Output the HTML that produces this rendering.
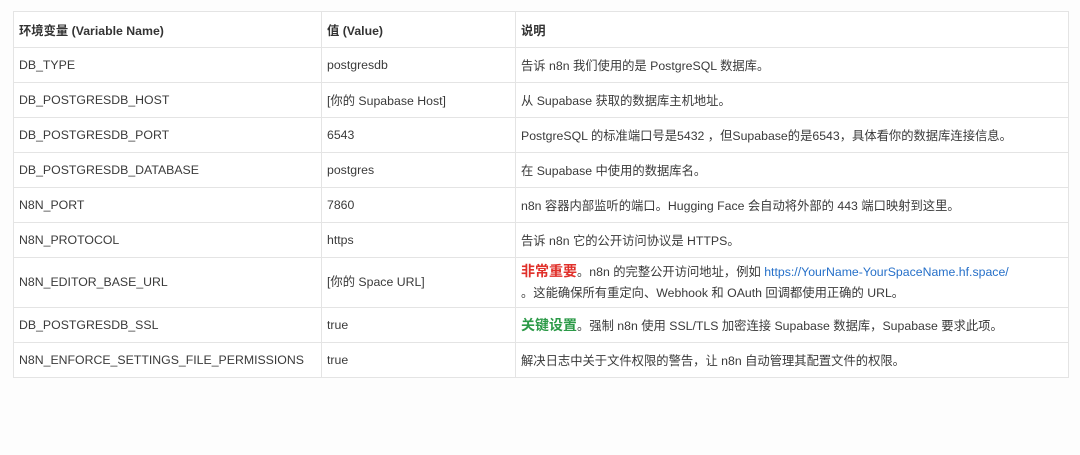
<!DOCTYPE html>
<html><head><meta charset="utf-8"><style>
body{margin:0;width:1080px;height:455px;background:#fdfdfd;font-family:"Liberation Sans","Noto Sans CJK SC",sans-serif;font-size:12.3px;color:#3a3a3a;overflow:hidden}
table{position:absolute;left:13px;top:11px;border-collapse:collapse;width:1056px;background:#fff}
td,th{border:1px solid #e4e4e4;padding:0 5px;text-align:left;vertical-align:middle;height:35px;box-sizing:border-box}
th{font-weight:bold;height:36px;color:#333}
tr.tall td{height:50px;line-height:21px}
.r{color:#e0302a;font-weight:bold;font-size:14px}
.g{color:#2c9a48;font-weight:bold;font-size:14px}
a{color:#2670c9;text-decoration:none}
</style></head><body>
<table>
<colgroup><col style="width:308px"><col style="width:194px"><col></colgroup>
<tr><th>环境变量 (Variable Name)</th><th>值 (Value)</th><th>说明</th></tr>
<tr><td>DB_TYPE</td><td>postgresdb</td><td>告诉 n8n 我们使用的是 PostgreSQL 数据库。</td></tr>
<tr><td>DB_POSTGRESDB_HOST</td><td>[你的 Supabase Host]</td><td>从 Supabase 获取的数据库主机地址。</td></tr>
<tr><td>DB_POSTGRESDB_PORT</td><td>6543</td><td>PostgreSQL 的标准端口号是5432 ，但Supabase的是6543，具体看你的数据库连接信息。</td></tr>
<tr><td>DB_POSTGRESDB_DATABASE</td><td>postgres</td><td>在 Supabase 中使用的数据库名。</td></tr>
<tr><td>N8N_PORT</td><td>7860</td><td>n8n 容器内部监听的端口。Hugging Face 会自动将外部的 443 端口映射到这里。</td></tr>
<tr><td>N8N_PROTOCOL</td><td>https</td><td>告诉 n8n 它的公开访问协议是 HTTPS。</td></tr>
<tr class="tall"><td>N8N_EDITOR_BASE_URL</td><td>[你的 Space URL]</td><td><span class="r">非常重要</span>。n8n 的完整公开访问地址，例如 <a>https://YourName-YourSpaceName.hf.space/</a><br>。这能确保所有重定向、Webhook 和 OAuth 回调都使用正确的 URL。</td></tr>
<tr><td>DB_POSTGRESDB_SSL</td><td>true</td><td><span class="g">关键设置</span>。强制 n8n 使用 SSL/TLS 加密连接 Supabase 数据库，Supabase 要求此项。</td></tr>
<tr><td>N8N_ENFORCE_SETTINGS_FILE_PERMISSIONS</td><td>true</td><td>解决日志中关于文件权限的警告，让 n8n 自动管理其配置文件的权限。</td></tr>
</table>
</body></html>
